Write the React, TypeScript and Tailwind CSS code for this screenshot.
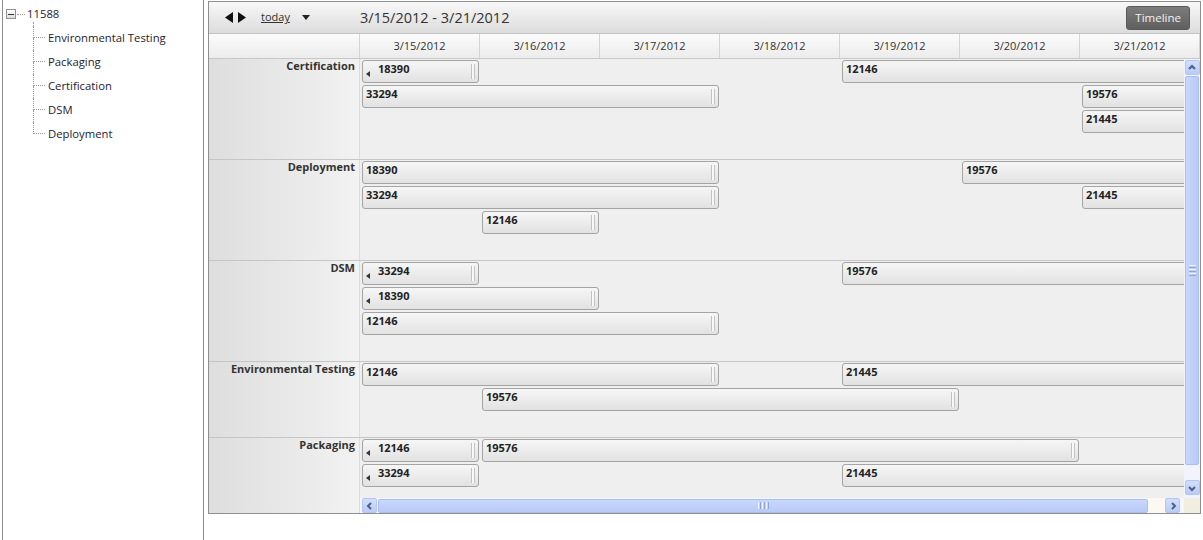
import React from 'react';

type Bar = { id: string; col: number; days: number; lane: number; cont?: boolean };
type Row = { name: string; lanes: number; bars: Bar[] };

const dates = ['3/15/2012', '3/16/2012', '3/17/2012', '3/18/2012', '3/19/2012', '3/20/2012', '3/21/2012'];

const treeItems = ['Environmental Testing', 'Packaging', 'Certification', 'DSM', 'Deployment'];

const rows: Row[] = [
  {
    name: 'Certification',
    lanes: 3,
    bars: [
      { id: '18390', col: 0, days: 1, lane: 0, cont: true },
      { id: '12146', col: 4, days: 3, lane: 0 },
      { id: '33294', col: 0, days: 3, lane: 1 },
      { id: '19576', col: 6, days: 1, lane: 1 },
      { id: '21445', col: 6, days: 1, lane: 2 },
    ],
  },
  {
    name: 'Deployment',
    lanes: 3,
    bars: [
      { id: '18390', col: 0, days: 3, lane: 0 },
      { id: '19576', col: 5, days: 2, lane: 0 },
      { id: '33294', col: 0, days: 3, lane: 1 },
      { id: '21445', col: 6, days: 1, lane: 1 },
      { id: '12146', col: 1, days: 1, lane: 2 },
    ],
  },
  {
    name: 'DSM',
    lanes: 3,
    bars: [
      { id: '33294', col: 0, days: 1, lane: 0, cont: true },
      { id: '19576', col: 4, days: 3, lane: 0 },
      { id: '18390', col: 0, days: 2, lane: 1, cont: true },
      { id: '12146', col: 0, days: 3, lane: 2 },
    ],
  },
  {
    name: 'Environmental Testing',
    lanes: 2,
    bars: [
      { id: '12146', col: 0, days: 3, lane: 0 },
      { id: '21445', col: 4, days: 3, lane: 0 },
      { id: '19576', col: 1, days: 4, lane: 1 },
    ],
  },
  {
    name: 'Packaging',
    lanes: 2,
    bars: [
      { id: '12146', col: 0, days: 1, lane: 0, cont: true },
      { id: '19576', col: 1, days: 5, lane: 0 },
      { id: '33294', col: 0, days: 1, lane: 1, cont: true },
      { id: '21445', col: 4, days: 3, lane: 1 },
    ],
  },
];

function Chevron({ dir }: { dir: 'up' | 'down' | 'left' | 'right' }) {
  const pts = {
    up: '2,6 5,3 8,6',
    down: '2,4 5,7 8,4',
    left: '6,2 3,5 6,8',
    right: '4,2 7,5 4,8',
  }[dir];
  return (
    <svg width="10" height="10" viewBox="0 0 10 10">
      <polyline points={pts} fill="none" stroke="#4d6185" strokeWidth="2" />
    </svg>
  );
}

function ScrollButton({ dir }: { dir: 'up' | 'down' | 'left' | 'right' }) {
  return (
    <div className="w-[15px] h-[15px] shrink-0 flex items-center justify-center rounded-[2px] border border-[#b3c6f3] bg-gradient-to-b from-[#d2defd] to-[#b9ccf8]">
      <Chevron dir={dir} />
    </div>
  );
}

function EventBar({ bar }: { bar: Bar }) {
  return (
    <div
      className="relative ml-[2px] mr-[1px] h-[23px] rounded-[3px] border border-[#a4a4a4] bg-gradient-to-b from-[#f6f6f6] to-[#e2e2e2] overflow-hidden whitespace-nowrap"
      style={{ gridColumn: `${bar.col + 1} / span ${bar.days}`, gridRow: bar.lane + 1 }}
    >
      <div className="flex items-start h-full">
        {bar.cont ? (
          <div className="w-[15px] shrink-0 h-full flex items-center pl-[3px] pt-[4px]">
            <div className="w-0 h-0 border-y-[3px] border-y-transparent border-r-[4px] border-r-[#333]" />
          </div>
        ) : (
          <div className="w-[3px] shrink-0" />
        )}
        <span className="text-[11px] font-bold leading-[15px] text-[#222]">{bar.id}</span>
        <div className="flex-1" />
        <div className="self-center mr-[3px] w-[4px] h-[15px] border-x border-[#c2c2c2] bg-[#f8f8f8]" />
      </div>
    </div>
  );
}

function TreeNode({ label, last }: { label: string; last: boolean }) {
  return (
    <div className="flex h-[24px]">
      <div className="w-[12px] flex flex-col shrink-0">
        <div className="h-[12px] border-l border-b border-dotted border-[#9a9a9a]" />
        <div className={last ? 'flex-1' : 'flex-1 border-l border-dotted border-[#9a9a9a]'} />
      </div>
      <span className="ml-[3px] leading-[24px] text-[11.3px] text-[#1e1b33]">{label}</span>
    </div>
  );
}

export default function App() {
  return (
    <div className="w-[1203px] h-[540px] bg-white flex overflow-hidden font-['Open_Sans',_'Noto_Sans',_sans-serif] text-[#333]">
      {/* tree panel */}
      <div className="ml-[2px] w-[202px] h-full shrink-0 border-x border-[#8c8c8c] pl-[1px] pt-[6px]">
        <div className="flex items-center h-[16px]">
          <div className="ml-[2px] w-[10px] h-[10px] border border-[#919191] bg-gradient-to-b from-white to-[#dcdcdc] flex items-center justify-center">
            <div className="w-[6px] h-[1px] bg-[#333]" />
          </div>
          <div className="w-[8px] ml-[1px] border-t border-dotted border-[#9a9a9a]" />
          <span className="ml-[2px] text-[11.3px] text-[#1e1b33]">11588</span>
        </div>
        <div className="ml-[29px]">
          <div className="h-[4px] border-l border-dotted border-[#9a9a9a]" />
          {treeItems.map((t, i) => (
            <TreeNode key={t} label={t} last={i === treeItems.length - 1} />
          ))}
        </div>
      </div>

      {/* scheduler */}
      <div className="ml-[4px] mt-[1px] w-[993px] h-[513px] shrink-0 border border-[#8f8f8f] flex flex-col">
        {/* toolbar */}
        <div className="h-[32px] shrink-0 flex items-center border-b border-[#c4c4c4] bg-gradient-to-b from-[#f8f8f8] to-[#dcdcdc]">
          <svg className="ml-[16px]" width="8" height="11" viewBox="0 0 8 11">
            <polygon points="8,0 0,5.5 8,11" fill="#111" />
          </svg>
          <svg className="ml-[5px]" width="8" height="11" viewBox="0 0 8 11">
            <polygon points="0,0 8,5.5 0,11" fill="#111" />
          </svg>
          <span className="ml-[15px] text-[11px] underline text-[#333]">today</span>
          <svg className="ml-[12px]" width="8" height="5" viewBox="0 0 8 5">
            <polygon points="0,0 8,0 4,5" fill="#222" />
          </svg>
          <span className="ml-[50px] text-[14.5px] text-[#333]">3/15/2012 - 3/21/2012</span>
          <div className="flex-1" />
          <div className="mr-[10px] h-[24px] px-[8px] flex items-center rounded-[3px] border border-[#5a5a5a] bg-gradient-to-b from-[#7c7c7c] to-[#5f5f5f] text-[11.5px] text-[#f2f2f2]">
            Timeline
          </div>
        </div>

        {/* date header */}
        <div className="h-[25px] shrink-0 flex border-b border-[#c8c8c8] bg-gradient-to-b from-[#fbfbfb] to-[#ececec]">
          <div className="w-[151px] shrink-0 border-r border-[#d4d4d4]" />
          {dates.map((d) => (
            <div
              key={d}
              className="w-[120px] shrink-0 border-r border-[#d4d4d4] flex items-center justify-center text-[11px] text-[#333]"
            >
              {d}
            </div>
          ))}
        </div>

        {/* body */}
        <div className="h-[439px] shrink-0 flex">
          <div className="w-[975px] shrink-0 overflow-hidden">
            {rows.map((row) => (
              <div key={row.name} className="flex border-b border-[#c6c6c6]">
                <div className="w-[151px] shrink-0 border-r border-[#dcdcdc] bg-gradient-to-r from-[#dedede] to-[#f2f2f2] text-right pr-[4px] text-[11px] font-bold leading-[14px] text-[#333]">
                  {row.name}
                </div>
                <div className="grid grid-cols-[repeat(7,120px)] auto-rows-[25px] shrink-0 pt-[1px] pb-[24px] bg-[#efefef]">
                  {row.bars.map((b) => (
                    <EventBar key={b.id + b.col} bar={b} />
                  ))}
                </div>
              </div>
            ))}
          </div>
          {/* vertical scrollbar */}
          <div className="w-[16px] shrink-0 flex flex-col items-center pt-[1px] bg-[#f1f4fc]">
            <ScrollButton dir="up" />
            <div className="mt-[1px] w-[14px] h-[389px] rounded-[2px] border border-[#a9bef0] bg-gradient-to-r from-[#c9d7fc] to-[#b7caf6] flex flex-col items-center justify-center gap-[1px]">
              <div className="w-[7px] h-[1px] bg-[#eef3ff]" />
              <div className="w-[7px] h-[1px] bg-[#8ca5dc]" />
              <div className="w-[7px] h-[1px] bg-[#eef3ff]" />
              <div className="w-[7px] h-[1px] bg-[#8ca5dc]" />
              <div className="w-[7px] h-[1px] bg-[#eef3ff]" />
              <div className="w-[7px] h-[1px] bg-[#8ca5dc]" />
            </div>
            <div className="h-[15px]" />
            <ScrollButton dir="down" />
          </div>
        </div>

        {/* horizontal scrollbar */}
        <div className="h-[15px] shrink-0 flex">
          <div className="w-[151px] shrink-0 border-r border-[#dcdcdc] bg-gradient-to-r from-[#dedede] to-[#f2f2f2]" />
          <div className="w-[824px] shrink-0 flex items-center pl-[2px] bg-[#f5f7fd]">
            <ScrollButton dir="left" />
            <div className="ml-[1px] w-[770px] h-[14px] rounded-[2px] border border-[#a9bef0] bg-gradient-to-b from-[#c9d7fc] to-[#b7caf6] flex items-center justify-center gap-[1px]">
              <div className="w-[1px] h-[7px] bg-[#eef3ff]" />
              <div className="w-[1px] h-[7px] bg-[#8ca5dc]" />
              <div className="w-[1px] h-[7px] bg-[#eef3ff]" />
              <div className="w-[1px] h-[7px] bg-[#8ca5dc]" />
              <div className="w-[1px] h-[7px] bg-[#eef3ff]" />
              <div className="w-[1px] h-[7px] bg-[#8ca5dc]" />
            </div>
            <div className="w-[17px] h-full bg-[#fbf9f1]" />
            <ScrollButton dir="right" />
          </div>
          <div className="w-[16px] shrink-0 bg-[#f1eee0]" />
        </div>
      </div>
    </div>
  );
}
